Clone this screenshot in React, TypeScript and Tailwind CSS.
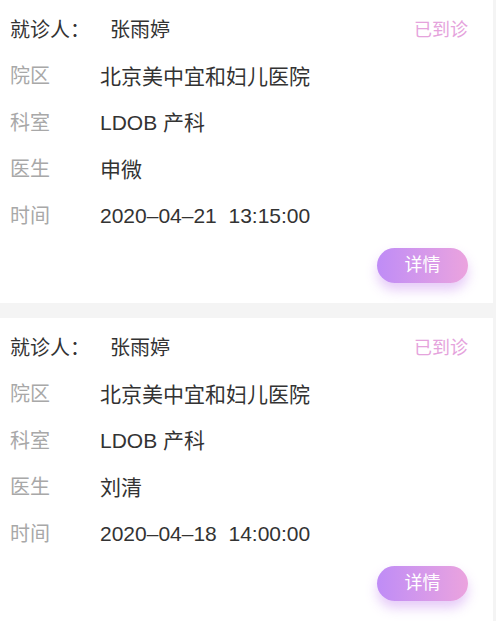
const records = [
  {
    name: '张雨婷',
    hospital: '北京美中宜和妇儿医院',
    dept: 'LDOB 产科',
    doctor: '申微',
    time: '2020–04–21\u00a0\u00a013:15:00',
  },
  {
    name: '张雨婷',
    hospital: '北京美中宜和妇儿医院',
    dept: 'LDOB 产科',
    doctor: '刘清',
    time: '2020–04–18\u00a0\u00a014:00:00',
  },
]

const Row = ({ label, value }: { label: string; value: string }) => (
  <div className="flex items-center h-[46.5px]">
    <span className="w-[90px] text-[20px] text-[#a8a8a8]">{label}</span>
    <span className="text-[21px] text-[#333]">{value}</span>
  </div>
)

const Card = ({ r }: { r: (typeof records)[number] }) => (
  <div className="bg-white w-[493px] h-[303px] pl-[10px] pr-[25px] pt-[7px]">
    <div className="flex items-center justify-between h-[46px]">
      <div className="flex items-center">
        <span className="w-[100px] text-[20px] text-[#333]">就诊人：</span>
        <span className="text-[20px] text-[#333]">{r.name}</span>
      </div>
      <span className="text-[18px] text-[#e5a3dc]">已到诊</span>
    </div>
    <Row label="院区" value={r.hospital} />
    <Row label="科室" value={r.dept} />
    <Row label="医生" value={r.doctor} />
    <Row label="时间" value={r.time} />
    <div className="flex justify-end mt-[9px]">
      <button className="w-[91px] h-[35px] rounded-full bg-gradient-to-r from-[#bf8cf6] to-[#eba3de] text-white text-[18px] shadow-[0_7px_12px_rgba(200,140,240,0.45)]">
        详情
      </button>
    </div>
  </div>
)

export default function App() {
  return (
    <div
      className="w-[496px] h-[621px] overflow-hidden bg-[#f4f4f4] flex flex-col gap-[15px]"
      style={{ fontFamily: '"Liberation Sans", "Noto Sans CJK SC", sans-serif' }}
    >
      {records.map((r, i) => (
        <Card key={i} r={r} />
      ))}
    </div>
  )
}
